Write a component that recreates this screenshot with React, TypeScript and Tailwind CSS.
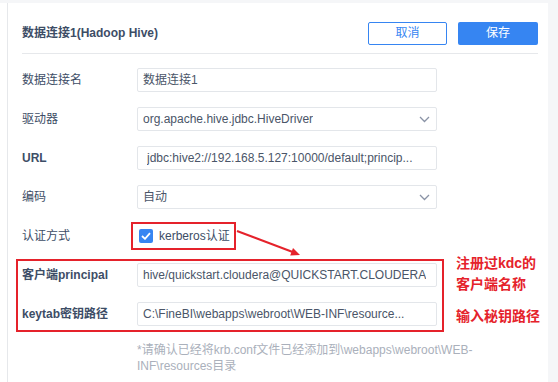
import React from "react";

const FONT = { fontFamily: '"Liberation Sans", "Noto Sans CJK SC", sans-serif' };

function Chevron() {
  return (
    <svg width="11" height="7" viewBox="0 0 11 7" fill="none">
      <polyline points="1,1 5.5,5.5 10,1" stroke="#8a93a6" strokeWidth="1.3" />
    </svg>
  );
}

function Row({ label, bold, children }: { label: string; bold?: boolean; children: React.ReactNode }) {
  return (
    <div className="flex h-[24px] items-center">
      <div className={`w-[115px] text-[12px] text-[#3d4d66] ${bold ? "font-bold" : ""}`}>{label}</div>
      {children}
    </div>
  );
}

function Input({ text, select, pl }: { text: string; select?: boolean; pl?: string }) {
  return (
    <div
      className={`flex h-[24px] w-[300px] items-center justify-between rounded-[2px] border border-[#e3e6ea] bg-white pr-[6px] text-[12px] text-[#4a5568] ${pl ?? "pl-[5px]"}`}
    >
      <span className="truncate whitespace-nowrap">{text}</span>
      {select && <Chevron />}
    </div>
  );
}

export default function App() {
  return (
    <div className="flex h-[382px] w-[558px] flex-col overflow-hidden bg-[#f5f6f8] pt-[3px]" style={FONT}>
      <div className="flex flex-1">
        <div className="w-[8px] border-r border-[#e6e8eb] bg-white" />
        <div className="relative flex-1 bg-white pl-[14px] pr-[10px] pt-[18px]">
          {/* header */}
          <div className="flex h-[24px] items-center justify-between">
            <div className="text-[12px] font-bold text-[#3d4d66]">数据连接1(Hadoop Hive)</div>
            <div className="flex gap-[11px]">
              <button className="flex h-[23px] w-[79px] items-center justify-center rounded-[2px] border border-[#3685f2] bg-white text-[12px] text-[#3685f2]">
                取消
              </button>
              <button className="flex h-[23px] w-[80px] items-center justify-center rounded-[2px] bg-[#3685f2] text-[12px] text-white">
                保存
              </button>
            </div>
          </div>
          <div className="mt-[8px] h-px bg-[#e6e8eb]" />

          <div className="mt-[14px] flex flex-col gap-[15px]">
            <Row label="数据连接名">
              <Input text="数据连接1" />
            </Row>
            <Row label="驱动器">
              <Input text="org.apache.hive.jdbc.HiveDriver" select />
            </Row>
            <Row label="URL" bold>
              <Input text="jdbc:hive2://192.168.5.127:10000/default;princip..." pl="pl-[9px]" />
            </Row>
            <Row label="编码">
              <Input text="自动" select />
            </Row>
            <Row label="认证方式">
              <div className="relative flex items-center gap-[6px] pl-[2px]">
                <span className="flex h-[14px] w-[14px] items-center justify-center rounded-[2px] bg-[#3685f2]">
                  <svg width="10" height="8" viewBox="0 0 10 8" fill="none">
                    <polyline points="1,4 4,6.8 9,1.2" stroke="white" strokeWidth="1.8" />
                  </svg>
                </span>
                <span className="text-[12px] text-[#3d4d66]">kerberos认证</span>
                <div className="absolute -bottom-[5px] -left-[6px] -right-[6px] -top-[5px] border-2 border-[#e5222b]" />
              </div>
            </Row>
            <div className="relative flex w-fit flex-col gap-[15px]">
              <Row label="客户端principal" bold>
                <Input text="hive/quickstart.cloudera@QUICKSTART.CLOUDERA" />
              </Row>
              <Row label="keytab密钥路径" bold>
                <Input text="C:\FineBI\webapps\webroot\WEB-INF\resource..." />
              </Row>
              <div className="absolute -bottom-[6px] -left-[6px] -right-[7px] -top-[4px] border-2 border-[#e5222b]" />
              <div className="absolute left-[434px] top-[-10px] whitespace-nowrap text-[14px] font-bold leading-[21px] text-[#e5222b]">
                注册过kdc的
                <br />
                客户端名称
              </div>
              <div className="absolute left-[434px] top-[43px] whitespace-nowrap text-[14px] font-bold leading-[21px] text-[#e5222b]">
                输入秘钥路径
              </div>
            </div>
          </div>

          <div className="ml-[115px] mt-[16px] whitespace-nowrap text-[12px] leading-[16px] text-[#aab0bb]">
            *请确认已经将krb.conf文件已经添加到\webapps\webroot\WEB-
            <br />
            INF\resources目录
          </div>

          {/* arrow */}
          <svg
            className="pointer-events-none absolute left-[228px] top-[225px]"
            width="70"
            height="32"
            viewBox="0 0 70 32"
          >
            <line x1="1" y1="3" x2="58" y2="24.5" stroke="#e5222b" strokeWidth="2" />
            <polygon points="64,27 54.2,27.5 57,20.1" fill="#e5222b" />
          </svg>
        </div>
        <div className="w-[10px]" />
      </div>
    </div>
  );
}
